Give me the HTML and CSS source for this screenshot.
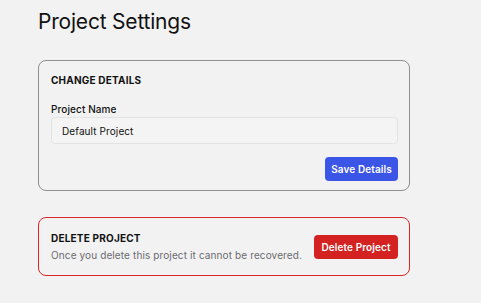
FILE: index.html
```html
<!DOCTYPE html>
<html>
<head>
<meta charset="utf-8">
<link rel="stylesheet" href="styles.css">
</head>
<body>
<main class="page">
  <h1 class="title">Project Settings</h1>
  <section class="card">
    <h2 class="card-title">CHANGE DETAILS</h2>
    <label class="label" for="pname">Project Name</label>
    <input class="input" id="pname" type="text" value="Default Project">
    <div class="actions">
      <button class="btn btn-blue">Save Details</button>
    </div>
  </section>
  <section class="card card-danger">
    <div class="danger-text">
      <h2 class="card-title">DELETE PROJECT</h2>
      <p class="desc">Once you delete this project it cannot be recovered.</p>
    </div>
    <button class="btn btn-red">Delete Project</button>
  </section>
</main>
</body>
</html>
```

FILE: styles.css
```css
html, body {
  margin: 0;
  padding: 0;
  background: #f2f2f2;
}
body {
  font-family: Inter, "Noto Sans", sans-serif;
  color: #111;
}
.page {
  padding: 10px 38px;
  width: 372px;
}
.title {
  font-size: 21px;
  font-weight: 400;
  margin: 0 0 26px 0;
  line-height: 24px;
  letter-spacing: -0.2px;
}
.card {
  border: 1px solid #8f8f94;
  border-radius: 8px;
  padding: 12px 11px 9px 12px;
  margin-bottom: 26px;
}
.card-title {
  font-size: 10px;
  font-weight: 700;
  margin: 0;
  line-height: 14px;
  letter-spacing: 0.2px;
}
.label {
  display: block;
  font-size: 10px;
  font-weight: 500;
  margin-top: 15px;
  line-height: 14px;
  letter-spacing: 0.1px;
}
.input {
  display: block;
  box-sizing: border-box;
  width: 100%;
  height: 27px;
  margin-top: 1px;
  padding: 0 10px;
  font-family: inherit;
  font-size: 10px;
  letter-spacing: 0.1px;
  color: #111;
  background: #f4f4f4;
  border: 1px solid #e3e3e3;
  border-radius: 4px;
  outline: none;
}
.actions {
  display: flex;
  justify-content: flex-end;
  margin-top: 13px;
}
.btn {
  font-family: inherit;
  font-size: 10px;
  font-weight: 600;
  color: #fff;
  border: none;
  border-radius: 4px;
  height: 24px;
  padding: 0;
  white-space: nowrap;
  letter-spacing: 0.1px;
}
.btn-blue {
  background: #3b55e6;
  width: 73px;
}
.btn-red {
  background: #d42121;
  width: 84px;
}
.card-danger {
  border-color: #dc2626;
  display: flex;
  align-items: center;
  justify-content: space-between;
  padding: 13px 11px 13px 12px;
}
.desc {
  margin: 3px 0 0 0;
  font-size: 10px;
  line-height: 14px;
  color: #6b6b70;
  letter-spacing: 0.12px;
}
```
